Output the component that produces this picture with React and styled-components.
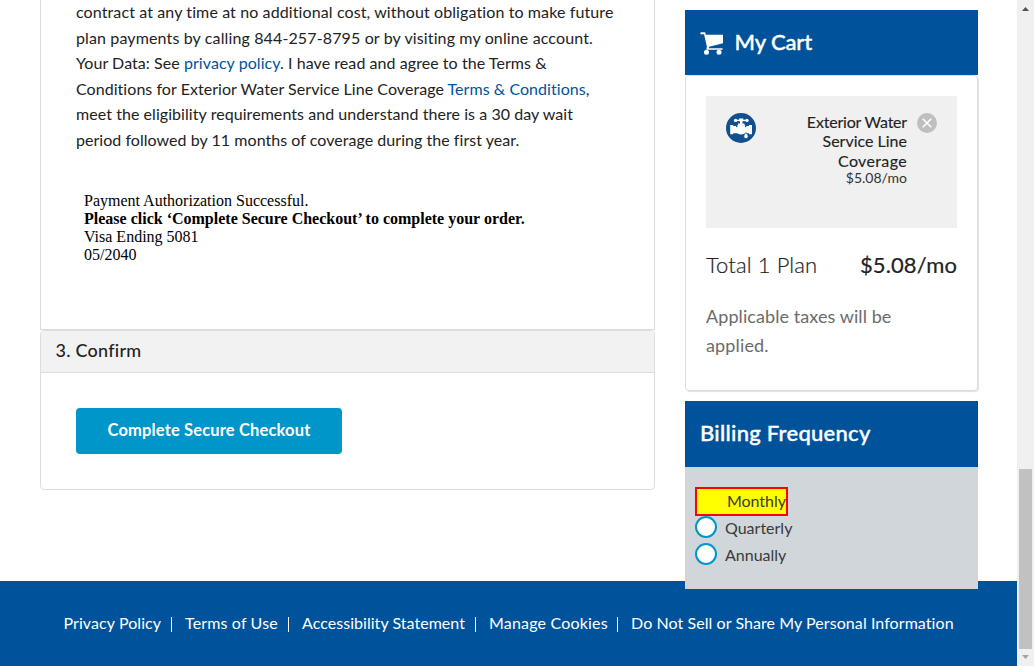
import React from 'react';
import styled, { createGlobalStyle } from 'styled-components';

const Global = createGlobalStyle`
  *, *::before, *::after { box-sizing: border-box; }
  html, body { margin: 0; padding: 0; overflow: hidden; background: #fff; }
  body { font-family: Lato, "Open Sans", sans-serif; color: #222; }
`;

const Viewport = styled.div`
  display: flex;
  width: 1034px;
  height: 666px;
  overflow: hidden;
`;

const Page = styled.div`
  display: flex;
  flex-direction: column;
  width: 1017px;
  height: 666px;
`;

const Content = styled.main`
  display: flex;
  align-items: flex-start;
  gap: 30px;
  height: 581px;
  flex: none;
  padding-left: 40px;
`;

const Column = styled.div`
  width: 615px;
`;

const PaymentPanel = styled.section`
  display: flow-root;
  height: 330px;
  padding: 0 35px;
  border: 1px solid #ddd;
  border-top: 0;
`;

const Line = styled.span`
  display: block;
  white-space: nowrap;
  letter-spacing: ${(p) => p.$ls || 0}px;
`;

const Terms = styled.p`
  margin: -1px 0 0;
  font-size: 16px;
  line-height: 25.6px;
`;

const Link = styled.a`
  color: #00539b;
  text-decoration: none;
`;

const Receipt = styled.div`
  margin: 39px 0 0 8px;
  font: 16px/18px "Liberation Serif", serif;
  color: #000;
`;

const ConfirmPanel = styled.section`
  height: 160px;
  border: 1px solid #ddd;
  border-radius: 4px;
`;

const ConfirmTitle = styled.h2`
  margin: 0;
  height: 42px;
  padding-left: 14.5px;
  border-bottom: 1px solid #ddd;
  border-radius: 3px 3px 0 0;
  background: #f2f2f2;
  font-size: 18px;
  font-weight: 500;
  line-height: 39px;
`;

const CheckoutButton = styled.button`
  display: block;
  width: 266px;
  height: 46px;
  margin: 35px 0 0 35px;
  padding: 0 0 2px;
  border: 0;
  border-radius: 4px;
  background: #0096ca;
  color: #fff;
  font: 700 16.5px/44px Lato, sans-serif;
`;

const Sidebar = styled.aside`
  position: relative;
  z-index: 1;
  width: 293px;
  padding-top: 10px;
`;

const CardTitle = styled.h2`
  display: flex;
  align-items: center;
  gap: 10.5px;
  margin: 0;
  height: ${(p) => p.$h}px;
  padding: 0 15px;
  background: #00539b;
  color: #fff;
  font-size: 22px;
  font-weight: 500;
  line-height: 26px;
  -webkit-text-stroke: 0.4px #fff;

  & > span {
    padding-bottom: 2px;
  }
`;

const CartBody = styled.div`
  height: 316px;
  padding: 20px 20px 0;
  border: 1px solid #ddd;
  border-radius: 4px;
  box-shadow: 1px 1px 1px rgba(0, 0, 0, 0.12);
`;

const CartItem = styled.div`
  display: flex;
  align-items: flex-start;
  height: 132px;
  padding: 17px 20px 0;
  background: #f0f0f0;
`;

const ItemText = styled.div`
  flex: 1;
  display: flex;
  flex-direction: column;
  align-items: flex-end;
  margin: -1px 10px 0 0;
  font-size: 16px;
  line-height: 19.4px;
  -webkit-text-stroke: 0.12px #222;
`;

const ItemPrice = styled.div`
  font-size: 14px;
  line-height: 15px;
  color: #333;
  -webkit-text-stroke: 0;
`;

const Total = styled.div`
  display: flex;
  justify-content: space-between;
  margin-top: 24px;
  font-size: 22px;
  line-height: 26px;
  -webkit-text-stroke: 0.2px #222;
`;

const Light = styled.span`
  font-weight: 300;
`;

const TaxNote = styled.p`
  margin: 24px 0 0;
  font-size: 18px;
  line-height: 29px;
  color: #6b6b6b;
`;

const Billing = styled.section`
  margin-top: 10px;
`;

const Options = styled.div`
  height: 122px;
  padding: 20px 10px 0;
  background: #d1d6da;
  color: #3a3a3a;
  font-size: 16px;
`;

const Option = styled.label`
  display: flex;
  align-items: center;
  height: 27px;
`;

const Highlighted = styled(Option)`
  width: 93px;
  height: 29px;
  margin-bottom: -2px;
  padding: 0 0 2px 30px;
  border: 2px solid #f00;
  background: #ff0;
`;

const Radio = styled.span`
  width: 22px;
  height: 22px;
  margin: -1px 8px 0 0;
  border: 2px solid #0096ca;
  border-radius: 50%;
  background: #fff;
`;

const Footer = styled.footer`
  display: flex;
  flex: 1;
  padding: 33px 0 0 63.5px;
  background: #00539b;
  color: #fff;
  font-size: 16px;
  line-height: 18px;
`;

const FooterLink = styled.a`
  flex: none;
  width: ${(p) => p.$w}px;
  white-space: nowrap;
  letter-spacing: ${(p) => p.$ls || 0}px;
`;

const Divider = styled.span`
  width: 1px;
  height: 15px;
  margin: 3px 13px 0 0;
  background: #fff;
`;

const Scrollbar = styled.div`
  display: flex;
  flex-direction: column;
  align-items: center;
  justify-content: space-between;
  width: 17px;
  height: 666px;
  padding: 7px 0 7px;
  background: #f0f0f0;
`;

const Thumb = styled.div`
  width: 13px;
  height: 180px;
  margin: auto 0 6px;
  background: #c1c1c1;
`;

const CartIcon = () => (
  <svg width="24" height="24" viewBox="0 0 24 24" fill="#fff" stroke="none">
    <path d="M0.5 1.3H5.2L5.8 3.8H23V12.2L9.2 15.8L8.8 17.2H22.5V18.8H6.4L6.9 15.4L4 3.3H0.5Z" />
    <circle cx="6.5" cy="21.2" r="2.5" />
    <circle cx="19" cy="21.2" r="2.5" />
  </svg>
);

const FaucetIcon = () => (
  <svg width="30" height="30" viewBox="0 0 30 30" stroke="none">
    <circle cx="15" cy="15" r="15" fill="#11508f" />
    <g fill="#fff">
      <circle cx="9.6" cy="7.4" r="1.7" />
      <circle cx="21" cy="7.4" r="1.7" />
      <path d="M9.8 6.7H20.6V8.1H9.8Z" />
      <path d="M13 5.4H17.4L16.8 8.4H16.4V10.6H18.4V12H12V10.6H14V8.4H13.6Z" />
      <path d="M4.2 12H7.2V13H10.6L12.4 11.6H18L19.8 13H23V12H26V21.2H23V20.2H19.6C18.2 20.4 17.4 21.4 15.2 21.4C13 21.4 12.2 20.4 10.6 20.2H7.2V21.2H4.2Z" />
      <path d="M20 19.6C21 21 22.2 22.2 22.2 23.4A2.2 2.2 0 0 1 17.8 23.4C17.8 22.2 19 21 20 19.6Z" stroke="#11508f" strokeWidth="0.8" />
    </g>
    <circle cx="10.8" cy="13.4" r="0.8" fill="#11508f" />
    <circle cx="19.6" cy="13.4" r="0.8" fill="#11508f" />
  </svg>
);

const RemoveIcon = () => (
  <svg width="20" height="20" viewBox="0 0 20 20">
    <circle cx="10" cy="10" r="10" fill="#bfbfbf" />
    <path d="M5.8 5.8L14.2 14.2M14.2 5.8L5.8 14.2" stroke="#fff" strokeWidth="1.6" />
  </svg>
);

const Arrow = ({ down }) => (
  <svg width="7" height="4" viewBox="0 0 7 4">
    <path d={down ? 'M0 0H7L3.5 4Z' : 'M0 4H7L3.5 0Z'} fill={down ? '#a3a3a3' : '#505050'} />
  </svg>
);

const footerLinks = [
  { text: 'Privacy Policy', w: 107.5, ls: 0.08 },
  { text: 'Terms of Use', w: 103, ls: 0.15 },
  { text: 'Accessibility Statement', w: 173, ls: 0.04 },
  { text: 'Manage Cookies', w: 128, ls: 0.19 },
  { text: 'Do Not Sell or Share My Personal Information', w: 340, ls: 0.07 },
];

export default function App() {
  return (
    <>
      <Global />
      <Viewport>
        <Page>
          <Content>
            <Column>
              <PaymentPanel>
                <Terms>
                  <Line $ls={0.11}>contract at any time at no additional cost, without obligation to make future</Line>
                  <Line $ls={0.13}>plan payments by calling 844-257-8795 or by visiting my online account.</Line>
                  <Line $ls={0.06}>Your Data: See <Link>privacy policy</Link>. I have read and agree to the Terms &amp;</Line>
                  <Line $ls={0.05}>Conditions for Exterior Water Service Line Coverage <Link>Terms &amp; Conditions</Link>,</Line>
                  <Line $ls={0.06}>meet the eligibility requirements and understand there is a 30 day wait</Line>
                  <Line $ls={0.04}>period followed by 11 months of coverage during the first year.</Line>
                </Terms>
                <Receipt>
                  <Line>Payment Authorization Successful.</Line>
                  <Line as="strong">Please click ‘Complete Secure Checkout’ to complete your order.</Line>
                  <Line>Visa Ending 5081</Line>
                  <Line>05/2040</Line>
                </Receipt>
              </PaymentPanel>
              <ConfirmPanel>
                <ConfirmTitle><Line $ls={0.25}>3. Confirm</Line></ConfirmTitle>
                <CheckoutButton><Line $ls={0.15}>Complete Secure Checkout</Line></CheckoutButton>
              </ConfirmPanel>
            </Column>
            <Sidebar>
              <CardTitle $h={65}><CartIcon /><Line $ls={-0.1}>My Cart</Line></CardTitle>
              <CartBody>
                <CartItem>
                  <FaucetIcon />
                  <ItemText>
                    <Line $ls={-0.2}>Exterior Water</Line>
                    <Line>Service Line</Line>
                    <Line $ls={0.35}>Coverage</Line>
                    <ItemPrice><Line>$5.08/mo</Line></ItemPrice>
                  </ItemText>
                  <RemoveIcon />
                </CartItem>
                <Total>
                  <Light><Line $ls={0.1}>Total 1 Plan</Line></Light>
                  <Line $ls={0.12}>$5.08/mo</Line>
                </Total>
                <TaxNote>
                  <Line $ls={0.08}>Applicable taxes will be</Line>
                  <Line $ls={0.15}>applied.</Line>
                </TaxNote>
              </CartBody>
              <Billing>
                <CardTitle $h={66}><Line $ls={0.27}>Billing Frequency</Line></CardTitle>
                <Options>
                  <Highlighted><Line $ls={-0.05}>Monthly</Line></Highlighted>
                  <Option><Radio /><Line>Quarterly</Line></Option>
                  <Option><Radio /><Line>Annually</Line></Option>
                </Options>
              </Billing>
            </Sidebar>
          </Content>
          <Footer>
            {footerLinks.map((link, i) => (
              <React.Fragment key={link.text}>
                {i > 0 && <Divider />}
                <FooterLink $w={link.w} $ls={link.ls}>{link.text}</FooterLink>
              </React.Fragment>
            ))}
          </Footer>
        </Page>
        <Scrollbar>
          <Arrow />
          <Thumb />
          <Arrow down />
        </Scrollbar>
      </Viewport>
    </>
  );
}
